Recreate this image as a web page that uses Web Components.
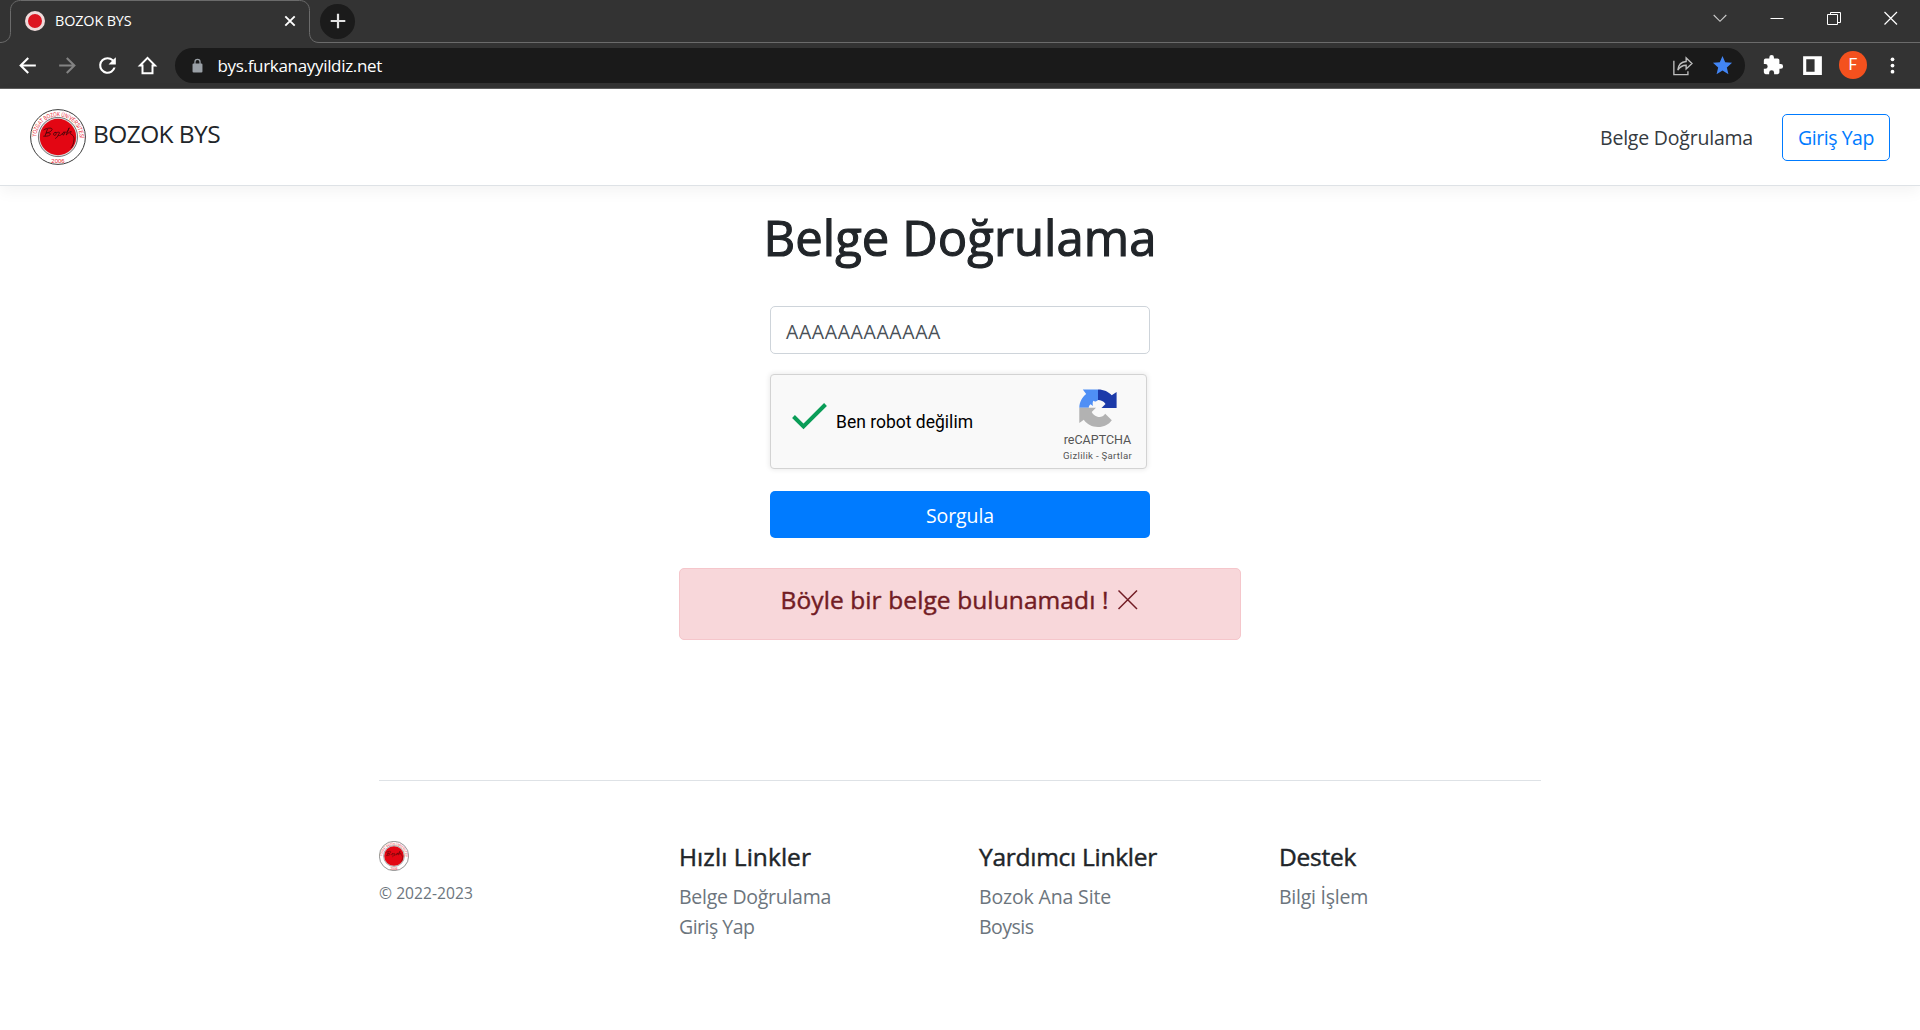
<!DOCTYPE html>
<html lang="tr">
<head>
<meta charset="utf-8">
<title>BOZOK BYS</title>
<style>
html,body{margin:0;height:100%;overflow:hidden;background:#fff}
body{font-family:"Open Sans","Noto Sans",sans-serif;color:#212529}
</style>
</head>
<body>
<browser-chrome page-title="BOZOK BYS" address="bys.furkanayyildiz.net"></browser-chrome>
<site-nav></site-nav>
<verify-page></verify-page>
<site-footer>
  <link-column heading="Hızlı Linkler" hw="132"><fit-text w="152">Belge Doğrulama</fit-text><fit-text w="75.5">Giriş Yap</fit-text></link-column>
  <link-column heading="Yardımcı Linkler" hw="178"><fit-text w="132">Bozok Ana Site</fit-text><fit-text w="54.5">Boysis</fit-text></link-column>
  <link-column heading="Destek" hw="77"><fit-text w="89">Bilgi İşlem</fit-text></link-column>
</site-footer>
<script>
class Base extends HTMLElement{
  constructor(){super();this.attachShadow({mode:'open'});}
  connectedCallback(){this.shadowRoot.innerHTML=this.view();}
}

/* Text run tracked to a given width through letter-spacing. */
class FitText extends Base{
  view(){return `<style>:host{display:block;white-space:nowrap;width:max-content}span{display:inline-block}</style><span><slot></slot></span>`;}
  connectedCallback(){
    super.connectedCallback();
    const s=this.shadowRoot.querySelector('span'),w=+this.getAttribute('w'),n=this.textContent.length;
    this.style.letterSpacing='0px';
    this.style.letterSpacing=((w-s.getBoundingClientRect().width)/n).toFixed(4)+'px';
  }
}

class BozokLogo extends Base{
  view(){return `<style>:host{display:block;flex:none}svg{display:block;width:100%;height:100%}</style>
  <svg viewBox="0 0 56 56">
    <defs><path id="top" d="M6.300 29a21.700 21.700 0 1 1 43.400 0"/></defs>
    <circle cx="28" cy="28" r="27.4" fill="#fff" stroke="#3c3c3c" stroke-width="1"/>
    <circle cx="28" cy="28" r="19.6" fill="#ddd" stroke="#777" stroke-width="1"/>
    <circle cx="28" cy="28" r="18.2" fill="#e30613"/>
    <text font-family="Liberation Sans,sans-serif" font-size="6.200" fill="#e8202c" textLength="67" lengthAdjust="spacingAndGlyphs"><textPath href="#top" startOffset="1">YOZGAT BOZOK ÜNİVERSİTESİ</textPath></text>
    <text x="28" y="54" text-anchor="middle" font-family="Liberation Sans,sans-serif" font-size="6" fill="#e8202c">2006</text>
    <path d="M13.500 21c4-2.500 9.500-2.500 8.500-.2s-4 2.700-6 3.200c3-.6 5.700.3 4 1.900s-5 1.300-6.700 1.300M17.500 20l-2.500 7M25 23.300c-2.200 1-1.700 3.500 0 3s1.700-3 0-3c2 .6 3-.4 4.200 0s-1.700 3.300-1.200 3.300c-1 2-2.500 3.200-3 2.700M28 26.600c1 0 2.200 0 3.200-.8s2-3 3-2.600 0 2.900-1 2.900-.5-2.700 1-2.900 2 .3 3-.2l2-4.200-3 7.200c2-2 4.500-4 5-3.500s-1.700 1.700-.7 2.400c1.500.8 4 2 3.500 6-.4 3.300-1 5.800-3 8" fill="none" stroke="#4c0609" stroke-width=".9"/>
  </svg>`;}
}

const ICONS={
  back:'<path fill="#fff" d="M20 11H7.830l5.590-5.590L12 4l-8 8 8 8 1.410-1.410L7.830 13H20z"/>',
  forward:'<path fill="#838383" d="M12 4l-1.410 1.410L16.170 11H4v2h12.170l-5.580 5.590L12 20l8-8z"/>',
  reload:'<path fill="#fff" d="M17.650 6.350A7.960 7.960 0 0 0 12 4a8 8 0 1 0 7.730 10h-2.080A6 6 0 1 1 12 6c1.660 0 3.140.690 4.220 1.780L13 11h7V4z"/>',
  home:'<path fill="none" stroke="#fff" stroke-width="1.900" d="M12 4.700 4.800 12h2.400v7.500h9.600V12h2.400z"/>',
  lock:'<path fill="#9aa0a6" d="M17.500 9H16.500V7a4.500 4.500 0 0 0-9 0v2h-1A1.500 1.500 0 0 0 5 10.500v10A1.500 1.500 0 0 0 6.500 22h11a1.500 1.500 0 0 0 1.500-1.500v-10A1.500 1.500 0 0 0 17.500 9zM9.300 9V7a2.700 2.700 0 0 1 5.400 0v2z"/>',
  share:'<g fill="none" stroke="#bdbdbd" stroke-width="1.300"><path d="M3.700 7.500v13.200h13.500v-3.200"/><path d="M7.500 16.500c.5-5 3.500-8 8-8.300V4.700l5.600 5.300-5.600 5.300v-3.500c-3.500 0-6 1.500-8 4.700z"/></g>',
  star:'<path fill="#4285f4" d="M12 17.270 18.180 21l-1.640-7.030L22 9.240l-7.190-.61L12 2 9.190 8.630 2 9.240l5.460 4.730L5.820 21z"/>',
  puzzle:'<path fill="#fff" d="M20.500 11H19V7a2 2 0 0 0-2-2h-4V3.500a2.500 2.500 0 0 0-5 0V5H4a2 2 0 0 0-1.990 2v3.800H3.500a2.700 2.700 0 0 1 0 5.400H2V20a2 2 0 0 0 2 2h3.800v-1.500a2.700 2.700 0 0 1 5.400 0V22H17a2 2 0 0 0 2-2v-4h1.500a2.500 2.500 0 0 0 0-5z"/>',
  panel:'<path fill="#fff" fill-rule="evenodd" d="M3 3h18v18H3zM6 6v12h8V6z"/>',
  dots:'<g fill="#fff"><circle cx="12" cy="6.100" r="1.800"/><circle cx="12" cy="12" r="1.800"/><circle cx="12" cy="17.900" r="1.800"/></g>',
  close:'<path stroke="#fff" stroke-width="1.900" d="m7.300 7.300 9.400 9.400M16.700 7.300l-9.400 9.400"/>',
  plus:'<path stroke="#e3e3e3" stroke-width="2.200" d="M12 4.700v14.600M4.700 12h14.600"/>',
  chev:'<path fill="none" stroke="#ccc" stroke-width="1.100" d="m5.700 9 6.300 6.300L18.300 9"/>',
  min:'<path stroke="#fff" d="M5.500 12.500h13"/>',
  restore:'<path fill="none" stroke="#fff" d="M5.500 8.500h10v10h-10zM8.500 8.500v-2h10v10h-3"/>',
  xwin:'<path stroke="#fff" stroke-width="1.200" d="m5.500 6 12.500 12.500M18 6 5.500 18.500"/>'
};
class UiIcon extends Base{
  view(){const s=this.getAttribute('size')||24;return `<style>:host{display:block;flex:none}svg{display:block}</style><svg width="${s}" height="${s}" viewBox="0 0 24 24">${ICONS[this.getAttribute('name')]}</svg>`;}
}

class BrowserChrome extends Base{
  view(){return `<style>
  :host{display:block;height:89px;background:#333;color:#fff;position:relative;box-sizing:border-box;border-bottom:1px solid #5f5f5f}
  .line{position:absolute;left:0;top:0;pointer-events:none}
  .tabs{display:flex;height:42px;align-items:center;box-sizing:border-box;margin-bottom:1px}
  .tab{display:flex;align-items:center;width:300px;margin-left:10px;height:42px;box-sizing:border-box;padding:0 8px 0 15px}
  .fav{width:20px;height:20px;border-radius:50%;border:3.500px solid #eedada;background:#dc1420;box-sizing:border-box}
  .title{margin-left:10px;font-size:14.400px;line-height:20px;flex:1;margin-top:-1px}
  .new{width:35px;height:35px;border-radius:50%;background:#1b1b1b;display:flex;align-items:center;justify-content:center;margin-left:10px}
  .win{display:flex;gap:33px;margin-left:auto;padding-right:17px;margin-top:-6px}
  .bar{display:flex;align-items:center;height:45px;padding:0 15px 0 15px}
  .left{display:flex;gap:15px;margin-top:-1px}
  .addr{display:flex;align-items:center;height:35px;width:1570px;box-sizing:border-box;background:#1a1a1a;border-radius:18px;margin-left:15px;padding:0 11px 0 14px}
  .url{font-size:17px;line-height:26px;margin-left:11.500px;flex:1}
  .ext{display:flex;align-items:center;margin-left:16px;margin-top:-1px}
  .me{width:28px;height:28px;margin:0 27px 0 14px;border-radius:50%;background:#f4511e;text-align:center;font:16px/28px Roboto,sans-serif}
  </style>
  <svg class="line" width="1920" height="43"><path fill="none" stroke="#6b6b6b" d="M0 42.500c6 0 10.500-3.500 10.500-10V10.500c0-6 4-10 10-10h279c6 0 10 4 10 10v22c0 6 3.500 10 9.500 10H1920"/></svg>
  <div class="tabs">
    <div class="tab"><div class="fav"></div><div class="title"><fit-text w="76.500">${this.getAttribute('page-title')}</fit-text></div><ui-icon name="close" size="24"></ui-icon></div>
    <div class="new"><ui-icon name="plus" size="24"></ui-icon></div>
    <div class="win"><ui-icon name="chev"></ui-icon><ui-icon name="min"></ui-icon><ui-icon name="restore"></ui-icon><ui-icon name="xwin"></ui-icon></div>
  </div>
  <div class="bar">
    <div class="left"><ui-icon name="back" size="25"></ui-icon><ui-icon name="forward" size="25"></ui-icon><ui-icon name="reload" size="25"></ui-icon><ui-icon name="home" size="25"></ui-icon></div>
    <div class="addr"><ui-icon name="lock" size="17"></ui-icon><div class="url"><fit-text w="164.500">${this.getAttribute('address')}</fit-text></div><ui-icon name="share" size="25"></ui-icon><ui-icon name="star" size="23" style="margin-left:16px"></ui-icon></div>
    <div class="ext"><ui-icon name="puzzle" size="22" style="margin-left:1px"></ui-icon><ui-icon name="panel" size="25" style="margin-left:16px"></ui-icon><div class="me">F</div><ui-icon name="dots" size="25" style="margin-left:-14px"></ui-icon></div>
  </div>`;}
}

class SiteNav extends Base{
  view(){return `<style>
  :host{display:flex;box-sizing:border-box;height:97px;padding:0 30px;border-bottom:1px solid #dee2e6;box-shadow:0 5px 15px rgba(0,0,0,.05);align-items:center;background:#fff;position:relative}
  bozok-logo{width:56px;height:56px}
  .name{font-size:24.500px;line-height:30px;margin-left:7px;margin-top:-6px;flex:1}
  .link{font-size:19.500px;line-height:30px;color:#343a40;margin-top:2px}
  .btn{box-sizing:border-box;height:47px;width:108px;margin-left:29px;border:1px solid #007bff;border-radius:5px;color:#007bff;font-size:19.500px;line-height:46px;display:flex;justify-content:center}
  </style>
  <bozok-logo></bozok-logo><div class="name"><fit-text w="127">BOZOK BYS</fit-text></div>
  <div class="link"><fit-text w="153">Belge Doğrulama</fit-text></div><div class="btn"><fit-text w="76">Giriş Yap</fit-text></div>`;}
}

class ReCaptcha extends Base{
  view(){return `<style>
  :host{display:flex;box-sizing:border-box;width:377px;height:95px;border:1px solid #d3d3d3;border-radius:4px;background:#f9f9f9;box-shadow:0 0 5px 1px rgba(0,0,0,.08);font-family:Roboto,sans-serif;align-items:flex-start;padding-left:21px}
  .tick{margin-top:27px;flex:none}
  .lab{margin:34px 0 0 8px;font-size:17.500px;line-height:26px;color:#000;flex:1}
  .brand{display:flex;flex-direction:column;align-items:center;width:70px;margin-right:13.500px;color:#555;padding-top:14px}
  .n{font-size:12.500px;line-height:15px;margin-top:5px}
  .t{font-size:9.600px;line-height:12px;margin-top:3px}
  </style>
  <svg class="tick" width="36" height="30"><path d="M1.500 14.500 11.500 24.500 33.500 2.500" fill="none" stroke="#0a9d58" stroke-width="4"/></svg>
  <div class="lab"><fit-text w="137">Ben robot değilim</fit-text></div>
  <div class="brand">
    <svg width="38" height="38" viewBox="0 0 38 38">
      <path fill="#1c3aa9" d="M19 .5c6 0 10.500 2.300 13.700 5.800L37.600 3v16H22.500l4-4C24.500 12 22 11 19 11z"/>
      <path fill="#4f8ff5" d="M19 .5H3.800l3.400 4.500C3 8.500.5 12.800.3 18.700h9.500c0-1.700.7-2.700 1.700-3.500l2.500 1.800c-.5-1.800-.5-3.500.3-5.200 1.500 1 3 1 4.700-.8z"/>
      <path fill="#b2b2b2" d="M.3 18.700V34l4.500-3.200C8 35.500 13 38 19 38c6 0 10.700-2.500 13.800-6.800l-6.600-6.500c-2 3-5 3.800-7.700 3-2.500-.7-4.500-2-5.800-4.700l4.300-4.300z"/>
    </svg>
    <div class="n"><fit-text w="67.500">reCAPTCHA</fit-text></div><div class="t"><fit-text w="69">Gizlilik - Şartlar</fit-text></div>
  </div>`;}
}

class VerifyPage extends Base{
  view(){return `<style>
  :host{display:flex;flex-direction:column;align-items:center;padding-top:21px}
  h1{margin:0;font-size:49px;line-height:60px;font-weight:500;-webkit-text-stroke:1.100px #212529}
  .form{width:380px;margin-top:39px;display:flex;flex-direction:column}
  .input{box-sizing:border-box;height:48px;border:1px solid #ced4da;border-radius:5px;padding-left:15px;font-size:19.500px;line-height:49px;color:#495057;margin-bottom:20px}
  .btn{height:47px;margin-top:22px;border-radius:5px;background:#007bff;color:#fff;font-size:19.500px;line-height:50px;display:flex;justify-content:center}
  .alert{box-sizing:border-box;width:562px;height:72px;margin-top:30px;background:#f8d7da;border:1px solid #f5c6cb;border-radius:5px;color:#721c24;font-size:24.500px;line-height:30px;font-weight:500;-webkit-text-stroke:.450px #721c24;display:flex;justify-content:center;padding:16px 1px 0 0;gap:8px}
  svg{margin-top:4px}
  </style>
  <h1><fit-text w="393">Belge Doğrulama</fit-text></h1>
  <div class="form">
    <div class="input"><fit-text w="155">AAAAAAAAAAAA</fit-text></div>
    <re-captcha></re-captcha>
    <div class="btn"><fit-text w="68">Sorgula</fit-text></div>
  </div>
  <div class="alert"><fit-text w="328">Böyle bir belge bulunamadı !</fit-text><svg width="22" height="22"><path d="m1.500 1.500 18.500 18.500M20 1.500 1.500 20" stroke="#721c24" stroke-width="1.500"/></svg></div>`;}
}

class SiteFooter extends Base{
  view(){return `<style>
  :host{display:grid;grid-template-columns:300px 300px 300px 1fr;width:1162px;box-sizing:border-box;margin:140px 0 0 379px;border-top:1px solid #dee2e6;padding-top:60px}
  bozok-logo{width:30px;height:30px}
  .c{font-size:15.600px;line-height:24px;color:#6c757d;margin-top:10px}
  </style>
  <div><bozok-logo></bozok-logo><div class="c"><fit-text w="94">© 2022-2023</fit-text></div></div><slot></slot>`;}
}
class LinkColumn extends Base{
  view(){return `<style>
  :host{display:flex;flex-direction:column;font-size:19.500px;line-height:30px;color:#6c757d;padding-top:1px}
  h5{margin:0 0 10px;font-size:24.500px;line-height:30px;font-weight:500;color:#212529;-webkit-text-stroke:.450px #212529}
  </style><h5><fit-text w="${this.getAttribute('hw')}">${this.getAttribute('heading')}</fit-text></h5><slot></slot>`;}
}
customElements.define('fit-text',FitText);
customElements.define('bozok-logo',BozokLogo);
customElements.define('ui-icon',UiIcon);
customElements.define('browser-chrome',BrowserChrome);
customElements.define('site-nav',SiteNav);
customElements.define('re-captcha',ReCaptcha);
customElements.define('verify-page',VerifyPage);
customElements.define('link-column',LinkColumn);
customElements.define('site-footer',SiteFooter);
/* Slotted text inherits its size from hosts defined later, so measure every run again. */
(function refit(root){root.querySelectorAll('*').forEach(e=>{if(e.localName==='fit-text')e.connectedCallback();else if(e.shadowRoot)refit(e.shadowRoot);});})(document);
</script>
</body>
</html>
